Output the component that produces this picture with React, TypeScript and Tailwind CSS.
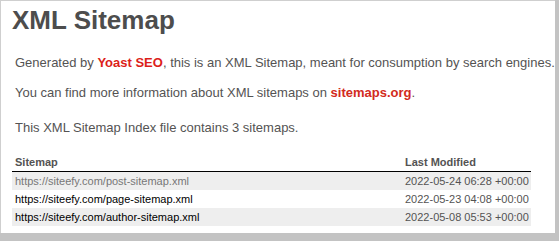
import React from "react";

const rows = [
  { url: "https://siteefy.com/post-sitemap.xml", date: "2022-05-24 06:28 +00:00", visited: true },
  { url: "https://siteefy.com/page-sitemap.xml", date: "2022-05-23 04:08 +00:00", visited: false },
  { url: "https://siteefy.com/author-sitemap.xml", date: "2022-05-08 05:53 +00:00", visited: false },
];

export default function App() {
  return (
    <div
      className="w-[559px] h-[241px] bg-[#c3c3c3] overflow-hidden"
      style={{ fontFamily: '"Liberation Sans", Arial, Helvetica, sans-serif' }}
    >
      <div className="w-[555px] h-[233px] bg-white border-t border-l border-[#cfcfcf] pl-[11px] pt-[4px] text-[#545353]">
        <h1 className="text-[26px] leading-[30px] font-bold text-[#4d4d4d] whitespace-nowrap">XML Sitemap</h1>
        <p className="mt-[20px] pl-[3px] text-[13px] leading-[16px] whitespace-nowrap">
          Generated by <a className="text-[#dc1e1a] font-semibold">Yoast SEO</a>, this is an XML Sitemap, meant for consumption by search engines.
        </p>
        <p className="mt-[14px] pl-[3px] text-[13px] leading-[16px] whitespace-nowrap">
          You can find more information about XML sitemaps on <a className="text-[#d22a20] font-semibold">sitemaps.org</a>.
        </p>
        <p className="mt-[19px] pl-[3px] text-[13px] leading-[16px] whitespace-nowrap">
          This XML Sitemap Index file contains 3 sitemaps.
        </p>
        <div className="mt-[18px] w-[519px] text-[11px]">
          <div className="flex h-[18px] leading-[17px] border-b border-black font-bold text-[#545353]">
            <div className="w-[390px] pl-[3px]">Sitemap</div>
            <div className="pl-[3px]">Last Modified</div>
          </div>
          {rows.map((r, i) => (
            <div key={r.url} className={`flex h-[18px] leading-[18px] ${i % 2 === 0 ? "bg-[#eeeeee]" : "bg-white"}`}>
              <div className={`w-[390px] pl-[3px] whitespace-nowrap ${r.visited ? "text-[#777777]" : "text-black"}`}>{r.url}</div>
              <div className="pl-[3px] whitespace-nowrap">{r.date}</div>
            </div>
          ))}
        </div>
      </div>
    </div>
  );
}
